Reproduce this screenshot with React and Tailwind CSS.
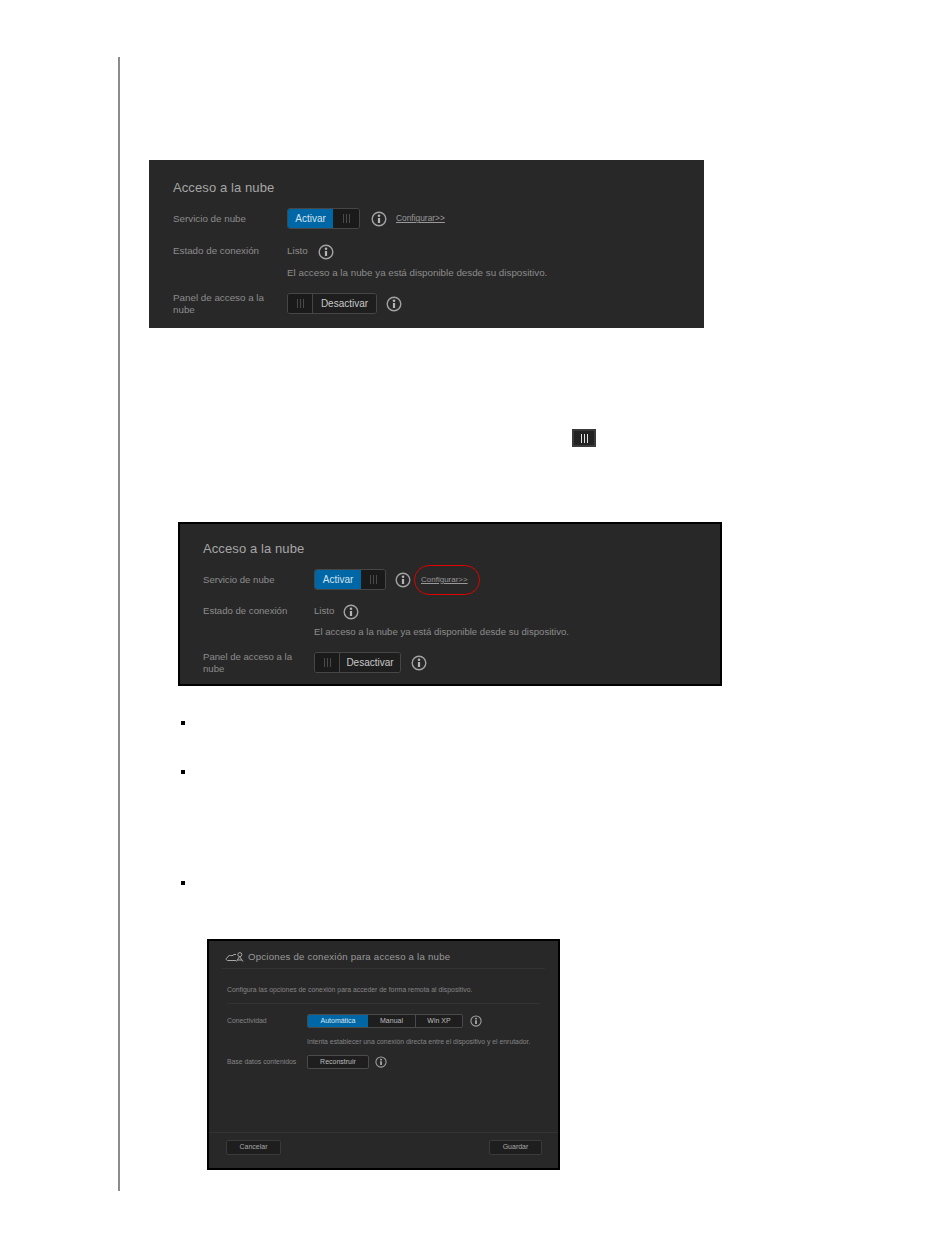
const font = "font-['Liberation_Sans',Arial,sans-serif]"

function InfoIcon({ className }) {
  return (
    <svg viewBox="0 0 16 16" className={className} fill="none">
      <circle cx="8" cy="8" r="6.8" stroke="#a3a3a3" strokeWidth="1.4" />
      <circle cx="8" cy="4.800" r="1.300" fill="#b5b5b5" />
      <path d="M8 7v5" stroke="#b5b5b5" strokeWidth="2.200" />
    </svg>
  )
}

function Bars({ className = "bg-[#4a4a4a]" }) {
  return (
    <span className="flex gap-[2px]">
      <span className={`w-px h-[9px] ${className}`}></span>
      <span className={`w-px h-[9px] ${className}`}></span>
      <span className={`w-px h-[9px] ${className}`}></span>
    </span>
  )
}

function AccessPanel({ box, labelCol, onWidth, barWidth, offWidth, iconGap, linkGap, linkSize, listoGap, lastGap, stateGap, msgGap, circled }) {
  return (
    <div className={`bg-[#282828] text-[#8c8c8c] ${box}`}>
      <div className="h-5 mb-[10px] flex items-center text-[#a6a6a6] text-[13px] tracking-[0.1px]">Acceso a la nube</div>

      <div className="flex items-center h-[21px]">
        <div className={`${labelCol} pt-[1px]`}>Servicio de nube</div>
        <div className="flex h-[21px] rounded-[3px] border border-[#464646] overflow-hidden">
          <span className={`${onWidth} flex items-center justify-center bg-[#0067a6] text-[#d3e2ec] text-[10px]`}>Activar</span>
          <span className={`${barWidth} flex items-center justify-center bg-[#1a1a1a]`}><Bars /></span>
        </div>
        <InfoIcon className={`w-4 h-4 ${iconGap}`} />
        <div className={`relative ${linkGap}`}>
          <a className={`block underline text-[#999999] ${linkSize}`}>Configurar&gt;&gt;</a>
          {circled && <span className="absolute left-[-7px] top-[-9px] w-[66px] h-[30px] rounded-[15px] border-[1.5px] border-[#e00000]"></span>}
        </div>
      </div>

      <div className={`flex items-center h-5 pt-[1px] ${stateGap}`}>
        <div className={labelCol}>Estado de conexión</div>
        <span>Listo</span>
        <InfoIcon className={`w-4 h-4 ${listoGap}`} />
      </div>

      <div className={`flex items-center h-4 pt-[1px] ${msgGap}`}>
        <div className={labelCol}></div>
        <span>El acceso a la nube ya está disponible desde su dispositivo.</span>
      </div>

      <div className="flex items-center h-[21px] mt-3">
        <div className={`${labelCol} leading-3`}>Panel de acceso a la nube</div>
        <div className="flex h-[21px] rounded-[3px] border border-[#464646] overflow-hidden">
          <span className="w-[25px] flex items-center justify-center bg-[#1a1a1a] border-r border-[#464646]"><Bars /></span>
          <span className={`${offWidth} flex items-center justify-center bg-[#1e1e1e] text-[#c8c8c8] text-[10px]`}>Desactivar</span>
        </div>
        <InfoIcon className={`w-4 h-4 ${lastGap}`} />
      </div>
    </div>
  )
}

function Bullet({ className }) {
  return <div className={`w-[4px] h-[4px] bg-black ${className}`}></div>
}

function ConnectionPanel() {
  return (
    <div className="ml-[87px] mt-[54px] w-[353px] h-[231px] flex flex-col bg-[#282828] border-2 border-black text-[#858585] text-[6.850px]">
      <div className="mx-[13px] h-[23px] mt-[5px] flex items-center border-b border-[#333333]">
        <svg viewBox="0 0 20 10" className="w-5 h-[10px] ml-[3px] mr-[3px]" fill="none" stroke="#a8a8a8" strokeWidth="1">
          <path d="M11 8.500H3C.8 8.500 .5 6 2.500 5.500 3 3.500 5 3 7 3.800L9 2.500h2" />
          <path d="M11.500 9.500 14.500 4.500 18 9.500M12.500 8h4.500" />
          <circle cx="14.800" cy="2.600" r="2" />
        </svg>
        <span className="text-[9.650px] text-[#9a9a9a] tracking-[0.23px]">Opciones de conexión para acceso a la nube</span>
      </div>

      <div className="mx-[18px] h-[35px] pt-[9px] flex items-center border-b border-[#333333]">Configura las opciones de conexión para acceder de forma remota al dispositivo.</div>

      <div className="ml-[18px] mt-[10px] flex items-center h-[14px]">
        <div className="w-[80px]">Conectividad</div>
        <div className="flex h-[14px] text-[7px] rounded-[2px] border border-[#4a4a4a] overflow-hidden">
          <span className="w-[60px] flex items-center justify-center bg-[#0067a6] text-[#d8e6f0]">Automática</span>
          <span className="w-[48px] flex items-center justify-center bg-[#1e1e1e] text-[#bdbdbd] border-r border-[#4a4a4a]">Manual</span>
          <span className="w-[46px] flex items-center justify-center bg-[#1e1e1e] text-[#bdbdbd]">Win XP</span>
        </div>
        <InfoIcon className="w-[12px] h-[12px] ml-[7px]" />
      </div>

      <div className="ml-[98px] mt-[9px] h-[10px] flex items-center">Intenta establecer una conexión directa entre el dispositivo y el enrutador.</div>

      <div className="ml-[18px] mt-[8px] flex items-center h-[14px]">
        <div className="w-[80px]">Base datos contenidos</div>
        <span className="w-[62px] h-[14px] text-[7px] flex items-center justify-center rounded-[2px] border border-[#4a4a4a] bg-[#1e1e1e] text-[#bdbdbd]">Reconstruir</span>
        <InfoIcon className="w-[12px] h-[12px] ml-[6px]" />
      </div>

      <div className="mt-auto h-[36px] border-t border-[#333333] flex items-start justify-between pt-[7px] pl-[17px] pr-4 text-[7px]">
        <span className="w-[55px] h-[15px] flex items-center justify-center rounded-[2px] border border-[#3a3a3a] bg-[#1e1e1e] text-[#a8a8a8]">Cancelar</span>
        <span className="w-[53px] h-[15px] flex items-center justify-center rounded-[2px] border border-[#3a3a3a] bg-[#1e1e1e] text-[#a8a8a8]">Guardar</span>
      </div>
    </div>
  )
}

export default function App() {
  return (
    <div className={`h-[1248px] bg-white pt-[57px] pl-[118px] ${font}`}>
      <div className="h-[1134px] border-l-2 border-[#8c8c8c] pt-[103px]">
        <AccessPanel
          box="ml-[29px] w-[555px] h-[168px] pl-6 pt-[18px] text-[9.800px]"
          labelCol="w-[114px]"
          onWidth="w-[45px]"
          barWidth="w-[26px]"
          offWidth="w-[63px]"
          iconGap="ml-[11px]"
          linkGap="ml-[9px]"
          linkSize="text-[8.400px]"
          listoGap="ml-[10px]"
          lastGap="ml-[9px]"
          stateGap="mt-3"
          msgGap="mt-1"
        />

        <div className="ml-[452px] mt-[101px] w-6 h-[18px] flex items-center justify-center bg-[#222222] border-2 border-[#3a3a3a]">
          <Bars className="bg-[#e4e4e4]" />
        </div>

        <AccessPanel
          box="ml-[58px] mt-[75px] w-[544px] h-[164px] border-2 border-black pl-[23px] pt-[15px] text-[9.600px]"
          labelCol="w-[111px]"
          onWidth="w-[46px]"
          barWidth="w-[24px]"
          offWidth="w-[60px]"
          iconGap="ml-[9px]"
          linkGap="ml-[10px]"
          linkSize="text-[8px]"
          listoGap="ml-[9px]"
          lastGap="ml-[10px]"
          stateGap="mt-[11px]"
          msgGap="mt-[3px]"
          circled
        />

        <Bullet className="ml-[61px] mt-[35px]" />
        <Bullet className="ml-[61px] mt-[45px]" />
        <Bullet className="ml-[61px] mt-[107px]" />

        <ConnectionPanel />
      </div>
    </div>
  )
}
